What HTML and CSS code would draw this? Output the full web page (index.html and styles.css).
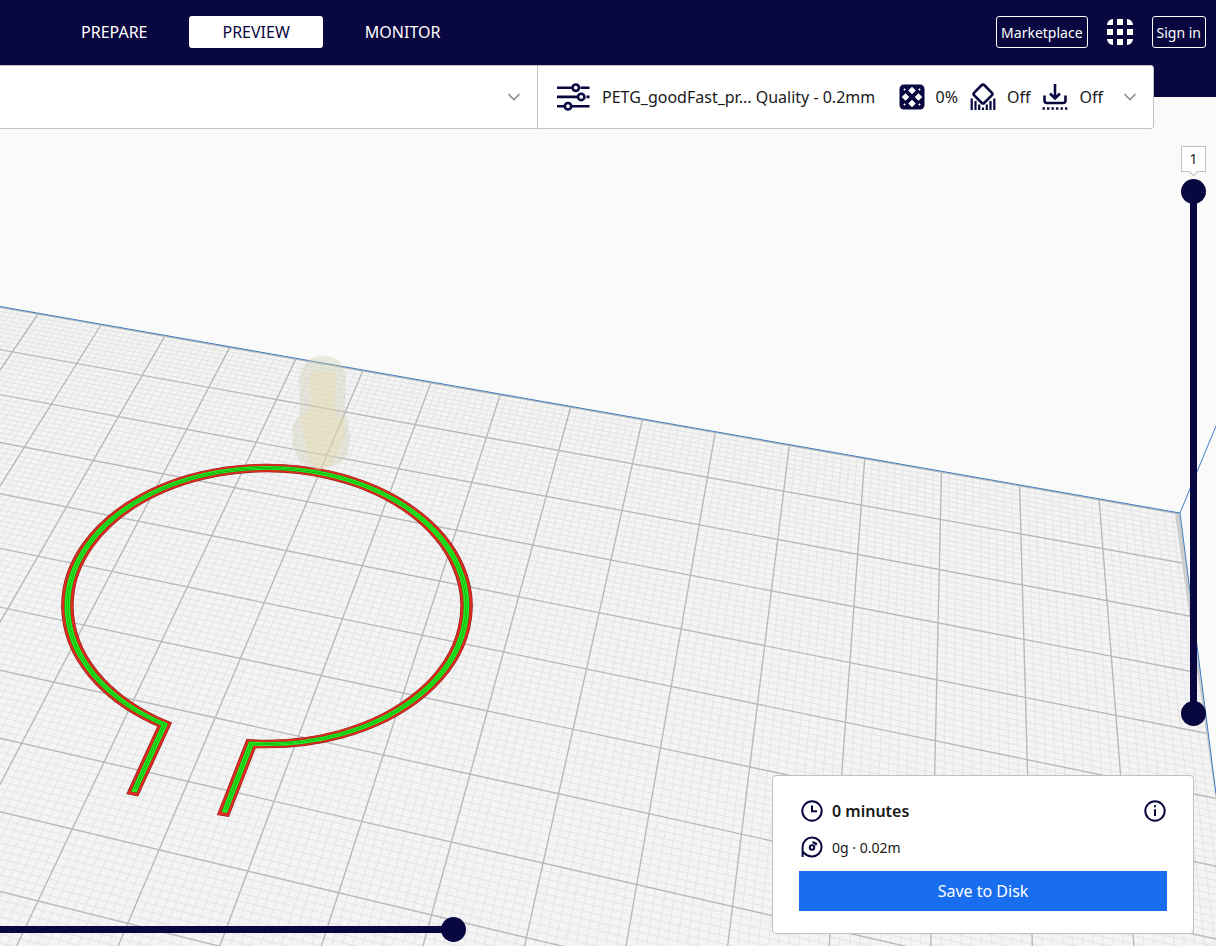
FILE: index.html
```html
<!DOCTYPE html>
<html lang="en">
<head>
<meta charset="utf-8">
<meta name="viewport" content="width=device-width, initial-scale=1">
<title>Slice preview</title>
<link rel="stylesheet" href="styles.css">
</head>
<body>
<div class="app">
  <svg class="scene" role="img" aria-label="Sliced model on the build plate">
    <g id="plate"></g>
    <polygon class="plate-side" points="1175,514 1180,514 1216,795 1216,802"/>
    <path class="volume-edge" d="M0 306.500L1180 513L1216 426M1180 513L1216 794"/>
    <g class="toolpath" transform="translate(267 606) scale(1.446 1)">
      <path class="wall-outline" d="M-93.200 189.300L-70.800 118.500A138 138 0 1 1 -11 137.600L-30.500 210"/>
      <path class="wall" d="M-93 188.800L-70.800 118.500A138 138 0 1 1 -11 137.600L-30.400 209.500"/>
      <path class="infill-outline" d="M-92.100 186L-70.800 118.500A138 138 0 1 1 -11 137.600L-29.500 206.500"/>
      <path class="infill" d="M-92.100 186L-70.800 118.500A138 138 0 1 1 -11 137.600L-29.500 206.500"/>
      <path class="infill-seam" d="M-91.200 183L-70.800 118.500A138 138 0 1 1 -11 137.600L-28.700 203.500"/>
      <path class="infill-core" d="M-91.200 183L-70.800 118.500A138 138 0 1 1 -11 137.600L-28.700 203.500"/>
    </g>
    <path class="nozzle-shell" d="M299 378Q299 371 304 366Q308 356 323 356Q338 356 342 366Q346 372 346 379L345 411L348 422L350 437L348 453Q344 464 328 467L318 470L306 466Q298 462 296 454L292 442L293 425L300 415Z"/>
    <path class="nozzle-core" d="M310 372H336L334 411L345 421L344 440L330 467L318 470L309 462L303 428L300 415L311 410Z"/>
  </svg>

  <header class="topbar">
    <nav class="stages">
      <button class="stage" type="button">PREPARE</button>
      <button class="stage stage-active" type="button">PREVIEW</button>
      <button class="stage" type="button">MONITOR</button>
    </nav>
    <div class="account">
      <button class="outline-btn" type="button">Marketplace</button>
      <button class="apps-btn" type="button" aria-label="Applications">
        <svg width="26" height="26" viewBox="0 0 26 26">
          <path d="M6 0v6H0A6 6 0 0 1 6 0zM10 0h6v6h-6zM20 0a6 6 0 0 1 6 6h-6zM0 10h6v6H0zM10 10h6v6h-6zM20 10h6v6h-6zM0 20h6v6a6 6 0 0 1-6-6zM10 20h6v6h-6zM20 20h6a6 6 0 0 1-6 6z"/>
        </svg>
      </button>
      <button class="outline-btn" type="button">Sign in</button>
    </div>
  </header>

  <main class="workspace">
    <div class="toolbar">
      <button class="panel panel-view" type="button" aria-label="View options">
        <svg class="chevron" width="14" height="14" viewBox="0 0 14 14"><path d="M1.500 4L7 9.500L12.500 4"/></svg>
      </button>
      <button class="panel panel-settings" type="button">
        <svg class="icon-line icon-heavy" width="34" height="28" viewBox="0 0 34 28">
          <path d="M1 4.700h15M24.500 4.700h9M1 13.900h20M30.500 13.900h3M1 23.200h7M16 23.200h17.500"/>
          <circle cx="19.800" cy="4.700" r="3.200"/><circle cx="25.200" cy="13.900" r="3.200"/><circle cx="12" cy="23.200" r="3.200"/>
        </svg>
        <span class="profile">PETG_goodFast_pr... Quality - 0.2mm</span>
        <span class="stat">
          <svg class="infill-icon" width="26" height="26" viewBox="0 0 26 26">
            <rect x="0.500" y="0.500" width="25" height="25" rx="4.500"/>
            <path d="M13 2.700l3.800 3.800-3.800 3.800-3.800-3.800zM6.500 9.200l3.800 3.800-3.800 3.800-3.800-3.800zM19.500 9.200l3.800 3.800-3.800 3.800-3.800-3.800zM13 15.700l3.800 3.800-3.800 3.800-3.800-3.800z"/>
            <path d="M5.500 4.300l1.200 1.200-1.200 1.200-1.200-1.200zM20.500 4.300l1.200 1.200-1.200 1.200-1.200-1.200zM5.500 19.300l1.200 1.200-1.200 1.200-1.200-1.200zM20.500 19.300l1.200 1.200-1.200 1.200-1.200-1.200z"/>
          </svg>
          <span>0%</span>
        </span>
        <span class="stat">
          <svg class="icon-line icon-heavy" width="26" height="28" viewBox="0 0 26 28">
            <rect x="5.800" y="3.800" width="14.400" height="14.400" rx="2" transform="rotate(45 13 11)"/>
            <path class="bars" d="M1.700 15.500V27M5.500 18V27M9.200 21.500V27M13 24.500V27M16.800 21.500V27M20.500 18V27M24.300 15.500V27"/>
          </svg>
          <span>Off</span>
        </span>
        <span class="stat">
          <svg class="icon-line icon-heavy" width="26" height="28" viewBox="0 0 26 28">
            <path d="M13 1V15M8 10.500l5 5 5-5M2.500 12.500v5q0 2.500 2.500 2.500h16q2.500 0 2.500-2.500v-5"/>
            <path class="dots" d="M0.500 25.500H26"/>
          </svg>
          <span>Off</span>
        </span>
        <svg class="chevron" width="14" height="14" viewBox="0 0 14 14"><path d="M1.500 4L7 9.500L12.500 4"/></svg>
      </button>
    </div>

    <div class="bottom">
      <input class="path-slider" type="range" min="0" max="100" value="100" aria-label="Path position">
      <section class="card">
        <div class="card-row">
          <svg class="icon-line" width="24" height="24" viewBox="0 0 24 24">
            <circle cx="12" cy="12" r="9.700"/><path d="M12 6.500V12.300H17"/>
          </svg>
          <strong class="card-time">0 minutes</strong>
          <button class="info-btn" type="button" aria-label="Print details">
            <svg class="icon-line" width="24" height="24" viewBox="0 0 24 24">
              <circle cx="12" cy="12" r="9.700"/><path d="M12 10.200V17M12 6.300V8.300"/>
            </svg>
          </button>
        </div>
        <div class="card-row">
          <svg class="icon-line" width="24" height="24" viewBox="0 0 24 24">
            <path d="M2.600 22V12A9.500 9.500 0 1 1 12 21.500Q7 21.500 2.600 16.500"/>
            <circle cx="12" cy="12.500" r="2.200"/><path d="M12.500 7l3.600 1.800-.8 1.600"/>
          </svg>
          <span class="card-material">0g · 0.02m</span>
        </div>
        <button class="save-btn" type="button">Save to Disk</button>
      </section>
    </div>
  </main>

  <div class="layers">
    <output class="layer-label">1</output>
    <div class="layer-track">
      <input type="range" min="0" max="1" value="0" aria-label="Upper layer">
      <input type="range" min="0" max="1" value="1" aria-label="Lower layer">
    </div>
  </div>
</div>
<script src="plate.js"></script>
</body>
</html>
```
FILE: plate.js
```js
// Build plate grid in perspective. Each anchor ties a grid crossing
// (column, row) to a point of the scene.
const anchors = [
  [-1, 0, 1180, 514],
  [15, 0, 38, 314],
  [11, 10, 38, 901],
  [4, 8, 732.5, 906.5],
];

function solve(m) {
  const n = m.length;
  for (let c = 0; c < n; c++) {
    let p = c;
    for (let r = c + 1; r < n; r++) if (Math.abs(m[r][c]) > Math.abs(m[p][c])) p = r;
    [m[c], m[p]] = [m[p], m[c]];
    for (let r = 0; r < n; r++) {
      if (r === c) continue;
      const f = m[r][c] / m[c][c];
      for (let k = c; k <= n; k++) m[r][k] -= f * m[c][k];
    }
  }
  return m.map((row, i) => row[n] / row[i]);
}

const h = solve(anchors.flatMap(([u, v, x, y]) => [
  [u, v, 1, 0, 0, 0, -u * x, -v * x, x],
  [0, 0, 0, u, v, 1, -u * y, -v * y, y],
]));

function at(u, v) {
  const w = h[6] * u + h[7] * v + 1;
  const x = (h[0] * u + h[1] * v + h[2]) / w;
  const y = (h[3] * u + h[4] * v + h[5]) / w;
  return x.toFixed(1) + " " + y.toFixed(1);
}

const columns = [-1, 24];
const rows = [0, 15];
let minor = "";
let major = "";

for (let i = columns[0] * 10; i <= columns[1] * 10; i++) {
  const line = "M" + at(i / 10, rows[0]) + "L" + at(i / 10, rows[1]);
  if (i % 10) minor += line; else if (i > columns[0] * 10) major += line;
}
for (let i = rows[0] * 10; i <= rows[1] * 10; i++) {
  const line = "M" + at(columns[0], i / 10) + "L" + at(columns[1], i / 10);
  if (i % 10) minor += line; else major += line;
}

const corners = [[columns[0], rows[0]], [columns[1], rows[0]], [columns[1], rows[1]], [columns[0], rows[1]]];
document.getElementById("plate").innerHTML =
  '<polygon class="plate-face" points="' + corners.map(c => at(c[0], c[1])).join(" ") + '"/>' +
  '<path class="grid-minor" d="' + minor + '"/>' +
  '<path class="grid-major" d="' + major + '"/>';
```
FILE: styles.css
```css
:root {
  --navy: #08073f;
  --line: #c0c1c2;
  --text: #191919;
}

* { box-sizing: border-box; }

body {
  margin: 0;
  font-family: "Noto Sans", sans-serif;
  font-size: 16px;
  color: var(--text);
}

button {
  font: inherit;
  color: inherit;
  background: none;
  border: 0;
  padding: 0;
  cursor: pointer;
}

svg { display: block; flex: none; }

.app {
  position: relative;
  display: flex;
  flex-direction: column;
  min-height: 100vh;
  overflow: hidden;
  background: #fafafa;
}

/* 3D scene behind the interface */
.scene {
  position: absolute;
  inset: 0;
  width: 100%;
  height: 100%;
}

.plate-face { fill: #f4f4f4; }
.grid-minor { fill: none; stroke: #e4e4e4; stroke-width: 1; }
.grid-major { fill: none; stroke: #b9b9b9; stroke-width: 1.4; }
.plate-side { fill: #cdcdcd; }
.volume-edge { fill: none; stroke: #3f7cc4; stroke-width: 1; }

.toolpath { fill: none; }
.wall-outline { stroke: #8c1713; stroke-width: 8.6; }
.wall { stroke: #dc2c22; stroke-width: 7.8; }
.infill-outline { stroke: #4d4a10; stroke-width: 4.2; }
.infill { stroke: #24ee20; stroke-width: 3.8; }
.infill-seam { stroke: #0c8a10; stroke-width: 1.4; }
.infill-core { stroke: #24ee20; stroke-width: 0.8; }

.nozzle-shell { fill: rgba(208, 205, 178, 0.38); }
.nozzle-core { fill: rgba(236, 222, 160, 0.3); }

/* Header */
.topbar {
  position: relative;
  display: flex;
  justify-content: space-between;
  align-items: flex-start;
  height: 97px;
  padding: 16px 10px 0 48px;
  background: var(--navy);
  color: #fff;
}

.stages { display: flex; gap: 9px; }

.stage {
  height: 32px;
  padding: 0 33px;
  border-radius: 3px;
}

.stage-active { background: #fff; color: var(--navy); }

.account { display: flex; align-items: center; gap: 19px; }

.outline-btn {
  height: 32px;
  padding: 0 4px;
  border: 1px solid #fff;
  border-radius: 3px;
  font-size: 14px;
}

.apps-btn svg { fill: #fff; }

/* Toolbar */
.workspace {
  position: relative;
  flex: 1;
  display: flex;
  flex-direction: column;
  justify-content: space-between;
}

.toolbar {
  display: grid;
  grid-template-columns: 537px 1fr;
  margin: -32px 62px 0 0;
}

.panel {
  display: flex;
  align-items: center;
  height: 64px;
  background: #fff;
  border: 1px solid var(--line);
}

.panel-view {
  justify-content: flex-end;
  padding-right: 16px;
  border-left: 0;
  border-right: 0;
}

.panel-settings {
  gap: 12px;
  padding: 0 16px 0 18px;
  border-radius: 0 3px 3px 0;
}

.profile { flex: 1; text-align: left; white-space: nowrap; }
.stat { display: flex; align-items: center; gap: 11px; }
.panel-settings > .chevron { margin-left: 8px; }

.chevron { fill: none; stroke: #8c8c8c; stroke-width: 1.6; }
.icon-line { fill: none; stroke: var(--navy); stroke-width: 2; }
.icon-heavy { stroke-width: 2.6; }
.icon-heavy .bars { stroke-width: 2.2; }
.icon-heavy .dots { stroke-width: 2.4; stroke-dasharray: 2.4 2.1; }
.infill-icon rect { fill: var(--navy); }
.infill-icon path { fill: #fff; }

/* Sliders */
input[type="range"] {
  appearance: none;
  margin: 0;
  background: none;
}

input[type="range"]::-webkit-slider-thumb {
  appearance: none;
  width: 25px;
  height: 25px;
  border-radius: 50%;
  background: var(--navy);
}

input.path-slider {
  width: 466px;
  height: 25px;
  margin-bottom: -8px;
}

.path-slider::-webkit-slider-runnable-track {
  background: linear-gradient(var(--navy), var(--navy)) left center / calc(100% - 12px) 7px no-repeat;
}

.layers {
  position: absolute;
  top: 146px;
  right: 10px;
  display: flex;
  flex-direction: column;
  align-items: center;
  gap: 7px;
}

.layer-label {
  position: relative;
  width: 25px;
  height: 26px;
  border: 1px solid var(--line);
  background: #fff;
  font-size: 14px;
  line-height: 24px;
  text-align: center;
}

.layer-label::after {
  content: "";
  position: absolute;
  left: 8px;
  bottom: -4px;
  width: 6px;
  height: 6px;
  background: #fff;
  border: solid var(--line);
  border-width: 0 1px 1px 0;
  transform: rotate(45deg);
}

.layer-track {
  display: grid;
  width: 25px;
  height: 547px;
  background: linear-gradient(var(--navy), var(--navy)) center / 7px calc(100% - 24px) no-repeat;
}

.layer-track input {
  grid-area: 1 / 1;
  writing-mode: vertical-lr;
  width: 25px;
  height: 547px;
}

/* Summary card */
.bottom {
  display: flex;
  justify-content: space-between;
  align-items: flex-end;
  padding: 0 22px 12px 0;
}

.card {
  display: flex;
  flex-direction: column;
  gap: 12px;
  width: 422px;
  padding: 23px 26px 22px;
  background: #fff;
  border: 1px solid var(--line);
  border-radius: 4px;
}

.card-row {
  display: flex;
  align-items: center;
  gap: 8px;
  height: 24px;
  padding-left: 1px;
}

.card-time { flex: 1; font-weight: 600; }
.card-material { font-size: 14px; }

.save-btn {
  height: 40px;
  background: #196ef0;
  color: #fff;
}
```
